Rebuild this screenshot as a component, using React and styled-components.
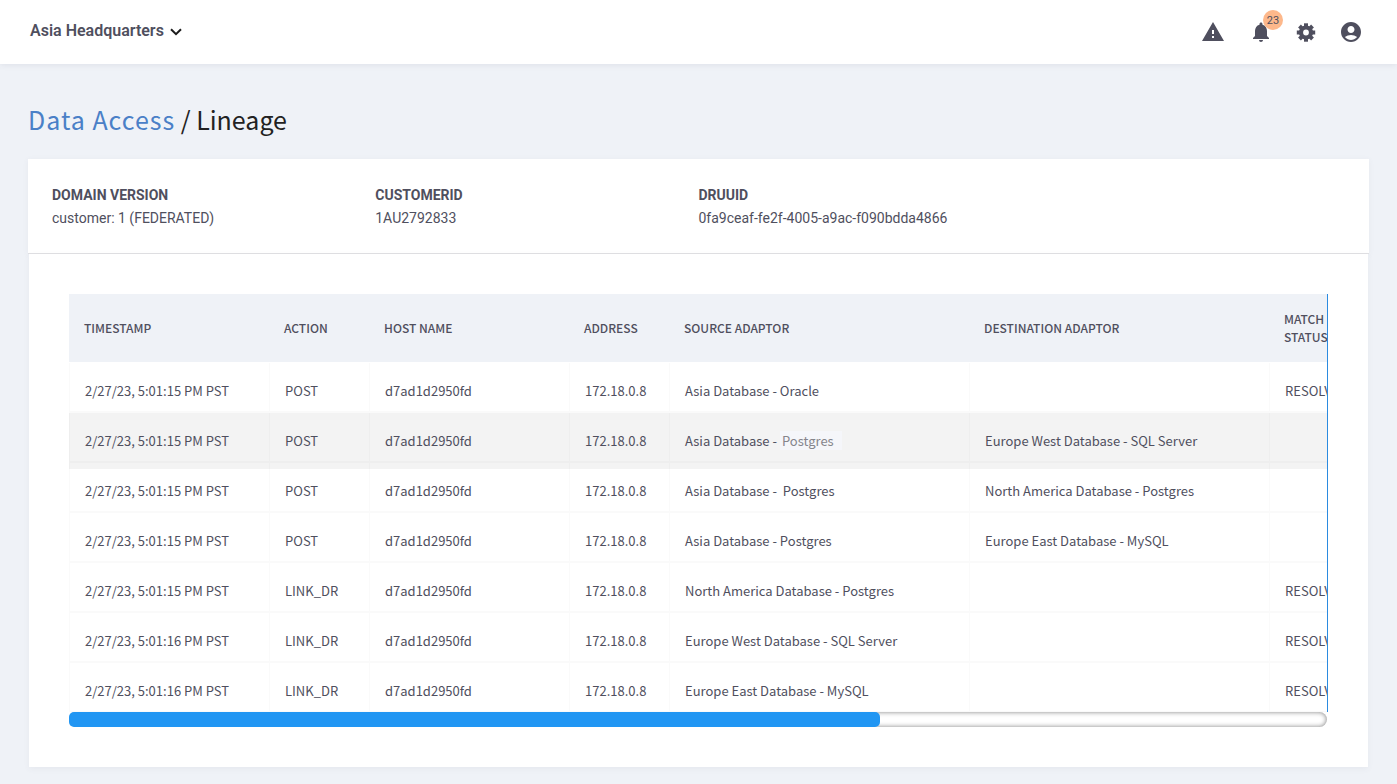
import React from 'react';
import styled, { createGlobalStyle, css } from 'styled-components';
import { MdAccountCircle, MdNotifications, MdWarning } from 'react-icons/md';

const sans = '"Noto Sans CJK SC", "Noto Sans", sans-serif';

const GlobalStyle = createGlobalStyle`
  * {
    box-sizing: border-box;
  }
  body {
    margin: 0;
    background: #eff2f7;
    color: #4f4f5e;
    font-family: Roboto, sans-serif;
    font-size: 14px;
  }
`;

const TopBar = styled.header`
  display: flex;
  align-items: center;
  justify-content: space-between;
  height: 64px;
  padding: 0 34px 0 30px;
  background: #fff;
  box-shadow: 0 1px 6px rgba(79, 79, 110, 0.1);
`;

const SiteButton = styled.button`
  display: flex;
  align-items: center;
  gap: 6px;
  padding: 0 0 2px;
  border: 0;
  background: none;
  color: inherit;
  font: 600 16px/20px Roboto, sans-serif;
  cursor: pointer;
  svg {
    margin-top: 2px;
  }
`;

const Actions = styled.nav`
  display: flex;
  align-items: center;
  gap: 21px;
`;

const IconButton = styled.button`
  position: relative;
  display: flex;
  padding: 0;
  border: 0;
  background: none;
  color: #4f4f5e;
  font-size: 24px;
  cursor: pointer;
  &:first-child {
    margin-right: 3px;
  }
`;

const Badge = styled.span`
  position: absolute;
  top: -10px;
  left: 14px;
  width: 20px;
  height: 20px;
  border-radius: 50%;
  background: #fdb88b;
  font: 400 11px/21px Roboto, sans-serif;
  text-align: center;
`;

const Page = styled.main`
  padding: 32px 28px 16px;
`;

const Title = styled.h1`
  margin: 0 0 17px;
  color: #222;
  font: 400 25px/46px ${sans};
  a {
    color: #4a80c7;
    letter-spacing: 1px;
    text-decoration: none;
  }
`;

const Summary = styled.dl`
  display: grid;
  grid-template-columns: repeat(4, 1fr);
  margin: 0;
  padding: 25px 24px 23px;
  border-bottom: 1px solid #e0e0e3;
  background: #fff;
  box-shadow: 0 1px 6px rgba(79, 79, 110, 0.06);
  line-height: 23px;
  dt {
    font-weight: 700;
  }
  dd {
    margin: 0;
  }
`;

const Panel = styled.section`
  margin: 0 1px;
  padding: 40px;
  background: #fff;
  box-shadow: 0 2px 6px rgba(79, 79, 110, 0.06);
`;

const Scroller = styled.div`
  overflow: hidden;
  border-right: 1px solid #2b8be0;
`;

const Table = styled.table`
  width: 1300px;
  margin-bottom: -1px;
  table-layout: fixed;
  border-collapse: separate;
  border-spacing: 0;
  font-family: ${sans};
  font-size: 13px;
  line-height: 18px;
`;

const HeadCell = styled.th`
  width: ${p => p.$width}px;
  height: 69px;
  padding: 0 15px;
  border-bottom: 1px solid #fff;
  background: #eff2f7;
  font-size: 12px;
  font-weight: 500;
  text-align: left;
`;

const Row = styled.tr`
  ${p =>
    p.$active &&
    css`
      background: #f3f3f3;
      box-shadow: 0 6px 0 #f3f3f3;
    `}
`;

const Cell = styled.td`
  height: 50px;
  padding: 8px 0 0 15px;
  border-left: 1px solid rgba(0, 0, 0, 0.02);
  border-bottom: 2px solid rgba(0, 0, 0, 0.02);
  white-space: pre;
`;

const Tag = styled.span`
  padding: 0 8px 0 2px;
  background: #f5f6fa;
  color: #85858c;
`;

const Track = styled.div`
  height: 15px;
  margin-right: 1px;
  border-radius: 8px;
  background: #fff;
  box-shadow: inset 0 0 5px #808080;
`;

const Thumb = styled.div`
  width: ${p => p.$size}%;
  height: 100%;
  border-radius: 5px;
  background: #2196f3;
`;

const summary = [
  ['DOMAIN VERSION', 'customer: 1 (FEDERATED)'],
  ['CUSTOMERID', '1AU2792833'],
  ['DRUUID', '0fa9ceaf-fe2f-4005-a9ac-f090bdda4866'],
];

const columns = [
  ['TIMESTAMP', 200],
  ['ACTION', 100],
  ['HOST NAME', 200],
  ['ADDRESS', 100],
  ['SOURCE ADAPTOR', 300],
  ['DESTINATION ADAPTOR', 300],
  ['MATCH STATUS', 100],
];

const host = 'd7ad1d2950fd';
const address = '172.18.0.8';

const rows = [
  ['2/27/23, 5:01:15 PM PST', 'POST', host, address, 'Asia Database - Oracle', '', 'RESOLVED'],
  [
    '2/27/23, 5:01:15 PM PST',
    'POST',
    host,
    address,
    <>
      Asia Database - <Tag>Postgres</Tag>
    </>,
    'Europe West Database - SQL Server',
    '',
  ],
  ['2/27/23, 5:01:15 PM PST', 'POST', host, address, 'Asia Database -  Postgres', 'North America Database - Postgres', ''],
  ['2/27/23, 5:01:15 PM PST', 'POST', host, address, 'Asia Database - Postgres', 'Europe East Database - MySQL', ''],
  ['2/27/23, 5:01:15 PM PST', 'LINK_DR', host, address, 'North America Database - Postgres', '', 'RESOLVED'],
  ['2/27/23, 5:01:16 PM PST', 'LINK_DR', host, address, 'Europe West Database - SQL Server', '', 'RESOLVED'],
  ['2/27/23, 5:01:16 PM PST', 'LINK_DR', host, address, 'Europe East Database - MySQL', '', 'RESOLVED'],
];

const Chevron = () => (
  <svg width="12" height="8" viewBox="0 0 12 8" fill="none" stroke="#1c1c1c" strokeWidth="2" aria-hidden="true">
    <path d="M1 1.2l5 5 5-5" />
  </svg>
);

const Gear = () => (
  <svg width="24" height="24" viewBox="0 0 24 24" fill="none" stroke="currentColor" aria-hidden="true">
    <circle cx="12" cy="12.5" r="5" strokeWidth="4.2" />
    {[0, 45, 90, 135, 180, 225, 270, 315].map(angle => (
      <path key={angle} d="M12 7V3.3" strokeWidth="4" transform={`rotate(${angle} 12 12.5)`} />
    ))}
  </svg>
);

const App = () => {
  return (
    <>
      <GlobalStyle />
      <TopBar>
        <SiteButton type="button">
          Asia Headquarters
          <Chevron />
        </SiteButton>
        <Actions>
          <IconButton type="button" aria-label="Warnings">
            <MdWarning />
          </IconButton>
          <IconButton type="button" aria-label="Notifications">
            <MdNotifications />
            <Badge>23</Badge>
          </IconButton>
          <IconButton type="button" aria-label="Settings">
            <Gear />
          </IconButton>
          <IconButton type="button" aria-label="Account">
            <MdAccountCircle />
          </IconButton>
        </Actions>
      </TopBar>
      <Page>
        <Title>
          <a href="#data-access">Data Access</a> / Lineage
        </Title>
        <Summary>
          {summary.map(([label, value]) => (
            <div key={label}>
              <dt>{label}</dt>
              <dd>{value}</dd>
            </div>
          ))}
        </Summary>
        <Panel>
          <Scroller>
            <Table>
              <thead>
                <tr>
                  {columns.map(([label, width]) => (
                    <HeadCell key={label} $width={width} scope="col">
                      {label}
                    </HeadCell>
                  ))}
                </tr>
              </thead>
              <tbody>
                {rows.map((row, i) => (
                  <Row key={i} $active={i === 1}>
                    {row.map((value, j) => (
                      <Cell key={j}>{value}</Cell>
                    ))}
                  </Row>
                ))}
              </tbody>
            </Table>
          </Scroller>
          <Track>
            <Thumb $size={64.5} />
          </Track>
        </Panel>
      </Page>
    </>
  );
};

export default App;
